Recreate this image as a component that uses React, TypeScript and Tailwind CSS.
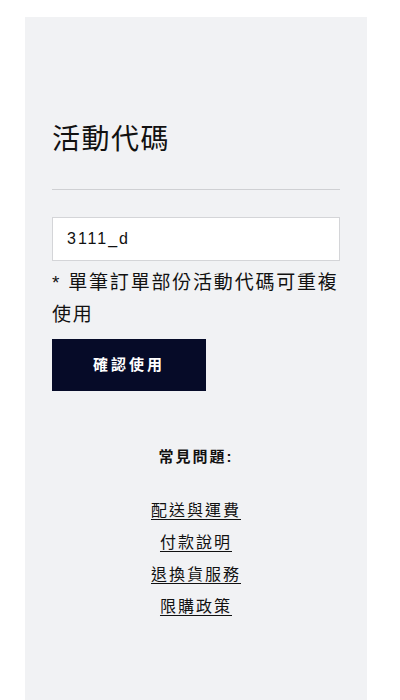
const FONT = { fontFamily: '"Liberation Sans", "Noto Sans CJK TC", sans-serif' };

const LINKS = ['配送與運費', '付款說明', '退換貨服務', '限購政策'];

export default function App() {
  return (
    <div className="min-h-[700px] bg-white pt-[17px] text-[#111]" style={FONT}>
      <div className="ml-[25px] min-h-[683px] w-[342px] bg-[#f1f2f4] px-[27px] pt-[103px]">
        <h2 className="text-[28px] font-normal leading-[40px] tracking-[1.5px]">活動代碼</h2>
        <div className="mt-[29px] border-t border-[#cfd0d3]" />
        <input
          defaultValue="3111_d"
          className="mt-[27px] block h-[44px] w-full border border-[#d4d5d8] bg-white px-[14px] text-[16px] tracking-[2px] text-[#111] outline-none"
          style={FONT}
        />
        <p className="mr-[-8px] mt-[6px] text-[19px] leading-[32px] tracking-[1.8px]">* 單筆訂單部份活動代碼可重複使用</p>
        <button className="mt-[8px] h-[52px] w-[154px] bg-[#060b28] text-[15px] font-bold tracking-[3px] text-white">
          確認使用
        </button>
        <div className="mt-[55px] text-center text-[15px] font-bold tracking-[2px]">常見問題:</div>
        <ul className="mt-[30px] flex flex-col items-center gap-[8px]">
          {LINKS.map((l) => (
            <li key={l}>
              <a href="#" className="text-[16px] leading-[24px] tracking-[2px] underline underline-offset-[3px]">
                {l}
              </a>
            </li>
          ))}
        </ul>
      </div>
    </div>
  );
}
